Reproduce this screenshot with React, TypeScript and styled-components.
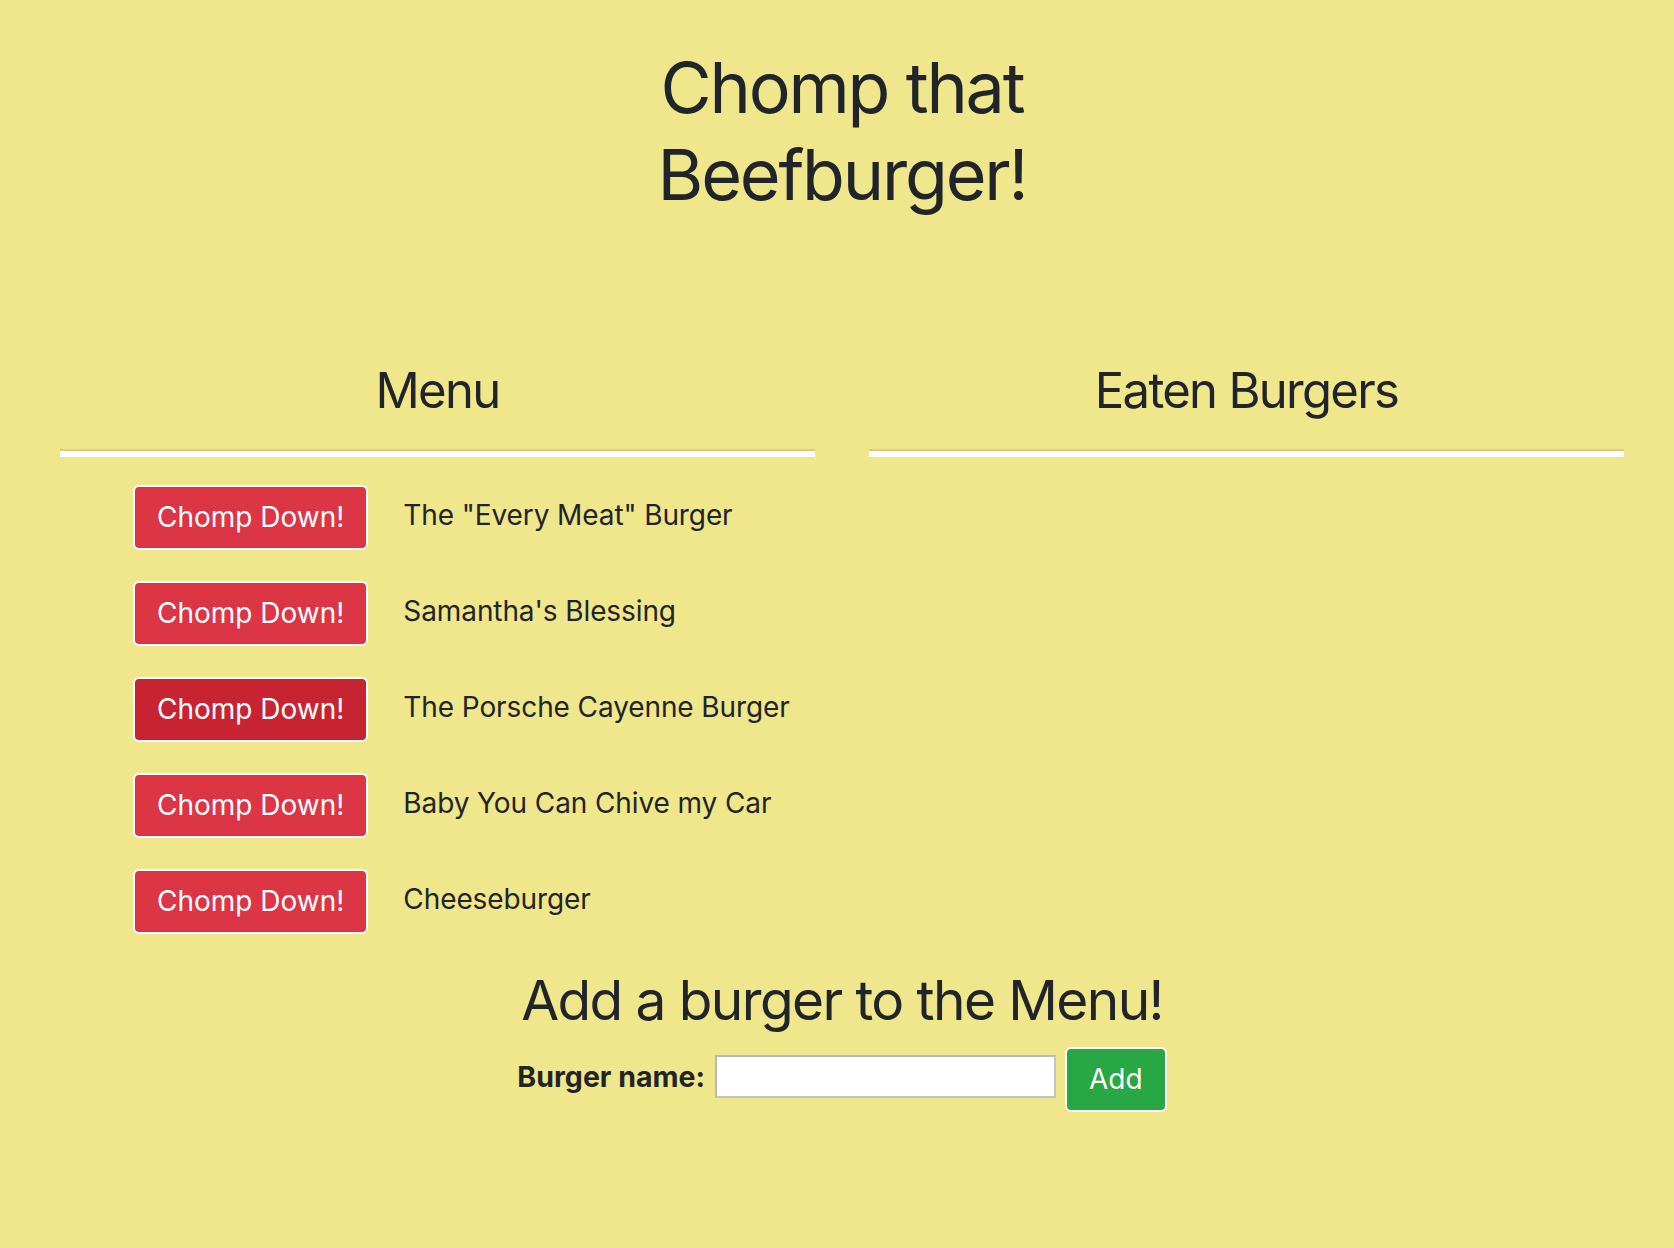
import React from "react";
import styled, { createGlobalStyle } from "styled-components";

const GlobalStyle = createGlobalStyle`
  html, body {
    margin: 0;
    padding: 0;
    background: #f0e68c;
  }
  body {
    font-family: Inter, "Noto Sans", "Liberation Sans", sans-serif;
    color: #212529;
  }
  * { box-sizing: border-box; }
`;

const Page = styled.div`
  min-height: 1248px;
  background: #f0e68c;
  padding: 44px 50px 40px 60px;
`;

const Title = styled.h1`
  margin: 0 auto;
  max-width: 440px;
  font-size: 70px;
  font-weight: 400;
  line-height: 87px;
  text-align: center;
  letter-spacing: -2.2px;
`;

const Columns = styled.div`
  display: grid;
  grid-template-columns: 1fr 1fr;
  column-gap: 54px;
  margin-top: 143px;
`;

const Column = styled.section`
  display: flex;
  flex-direction: column;
`;

const ColumnHeading = styled.h2`
  margin: 0;
  font-size: 49px;
  font-weight: 400;
  line-height: 60px;
  text-align: center;
  letter-spacing: -1.7px;
`;

const Rule = styled.hr`
  margin: 28px 0 0;
  height: 8px;
  border: none;
  border-top: 2px solid rgba(0, 0, 0, 0.1);
  background: #ffffff;
  background-clip: content-box;
`;

const List = styled.ul`
  list-style: none;
  margin: 28px 0 0;
  padding: 0 0 0 73px;
  display: flex;
  flex-direction: column;
  gap: 31px;
`;

const Row = styled.li`
  display: flex;
  align-items: center;
  gap: 35px;
`;

const ActionButton = styled.button<{ $variant: "danger" | "dangerActive" | "success" }>`
  font-family: Inter, "Noto Sans", "Liberation Sans", sans-serif;
  font-size: 28px;
  line-height: 43px;
  font-weight: 400;
  color: #ffffff;
  padding: 9px 22px;
  border: 2px solid #ffffff;
  border-radius: 6px;
  cursor: pointer;
  background: ${(p) =>
    p.$variant === "success" ? "#28a745" : p.$variant === "dangerActive" ? "#c82333" : "#dc3545"};
`;

const ItemName = styled.span`
  font-size: 28px;
  line-height: 42px;
  letter-spacing: -0.1px;
  padding-bottom: 6px;
`;

const AddHeading = styled.h2`
  margin: 33px 0 0;
  font-size: 55px;
  font-weight: 400;
  line-height: 67px;
  text-align: center;
  letter-spacing: -1.6px;
`;

const Form = styled.form`
  margin-top: 13px;
  display: flex;
  justify-content: center;
  align-items: center;
`;

const Label = styled.label`
  font-size: 28.5px;
  font-weight: 700;
  line-height: 40px;
  margin: 0 10px 6px 0;
`;

const NameInput = styled.input`
  width: 341px;
  height: 43px;
  margin: 0 9px 6px 0;
  padding: 2px 6px;
  font-size: 22px;
  background: #ffffff;
  border: 2px solid #c4c4c4;
  border-top-color: #b8b8b8;
  border-left-color: #b8b8b8;
  border-radius: 0;
  outline: none;
`;

const burgers = [
  'The "Every Meat" Burger',
  "Samantha's Blessing",
  "The Porsche Cayenne Burger",
  "Baby You Can Chive my Car",
  "Cheeseburger",
];

export default function App() {
  return (
    <>
      <GlobalStyle />
      <Page>
        <Title>Chomp that Beefburger!</Title>
        <Columns>
          <Column>
            <ColumnHeading>Menu</ColumnHeading>
            <Rule />
            <List>
              {burgers.map((name, i) => (
                <Row key={name}>
                  <ActionButton type="button" $variant={i === 2 ? "dangerActive" : "danger"}>
                    Chomp Down!
                  </ActionButton>
                  <ItemName>{name}</ItemName>
                </Row>
              ))}
            </List>
          </Column>
          <Column>
            <ColumnHeading>Eaten Burgers</ColumnHeading>
            <Rule />
          </Column>
        </Columns>
        <AddHeading>Add a burger to the Menu!</AddHeading>
        <Form onSubmit={(e) => e.preventDefault()}>
          <Label htmlFor="burger-name">Burger name:</Label>
          <NameInput id="burger-name" type="text" />
          <ActionButton type="submit" $variant="success">
            Add
          </ActionButton>
        </Form>
      </Page>
    </>
  );
}
